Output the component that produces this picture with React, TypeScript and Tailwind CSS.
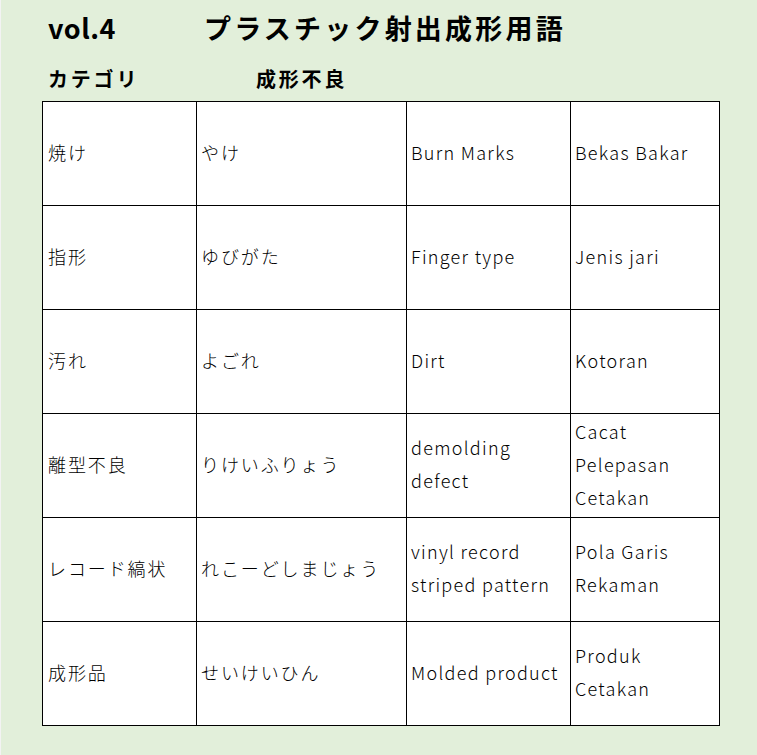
import React from "react";

type Row = { cat: string; kana: string; en: string[]; id: string[] };

const rows: Row[] = [
  { cat: "焼け", kana: "やけ", en: ["Burn Marks"], id: ["Bekas Bakar"] },
  { cat: "指形", kana: "ゆびがた", en: ["Finger type"], id: ["Jenis jari"] },
  { cat: "汚れ", kana: "よごれ", en: ["Dirt"], id: ["Kotoran"] },
  {
    cat: "離型不良",
    kana: "りけいふりょう",
    en: ["demolding", "defect"],
    id: ["Cacat", "Pelepasan", "Cetakan"],
  },
  {
    cat: "レコード縞状",
    kana: "れこーどしまじょう",
    en: ["vinyl record", "striped pattern"],
    id: ["Pola Garis", "Rekaman"],
  },
  { cat: "成形品", kana: "せいけいひん", en: ["Molded product"], id: ["Produk", "Cetakan"] },
];

const font = { fontFamily: '"Noto Sans CJK JP", "Noto Sans", sans-serif' };

// jp cells get a bit more letter spacing than the latin ones
const Cell = ({ lines, jp = false, pad = "pl-[4px]" }: { lines: string[]; jp?: boolean; pad?: string }) => (
  <div
    className={`flex flex-col justify-center h-[104px] pb-[3px] border-r border-b border-black ${pad} text-[18px] leading-[33px] font-light text-black ${
      jp ? "tracking-[1.9px]" : "tracking-[1.3px]"
    }`}
  >
    {lines.map((l) => (
      <span key={l} className="whitespace-nowrap">
        {l}
      </span>
    ))}
  </div>
);

const App = () => {
  return (
    <div
      className="w-[757px] h-[755px] bg-[#e2efda] border-l border-[#f3f3f3] text-black"
      style={font}
    >
      <div className="flex items-center h-[56px] pl-[47px] font-bold">
        <span className="w-[156px] text-[27px] tracking-[0.5px]">vol.4</span>
        <span className="text-[27px] tracking-[3.2px]">プラスチック射出成形用語</span>
      </div>

      <div className="flex items-center h-[45px] pl-[47px] font-bold text-[20px] tracking-[2.8px]">
        <span className="w-[208px]">カテゴリ</span>
        <span>成形不良</span>
      </div>

      <div className="ml-[41px] w-[678px] grid grid-cols-[154px_210px_164px_149px] border-l border-t border-black bg-white">
        {rows.map((r) => (
          <React.Fragment key={r.cat}>
            <Cell lines={[r.cat]} jp pad="pl-[5px]" />
            <Cell lines={[r.kana]} jp />
            <Cell lines={r.en} />
            <Cell lines={r.id} />
          </React.Fragment>
        ))}
      </div>
    </div>
  );
};

export default App;
